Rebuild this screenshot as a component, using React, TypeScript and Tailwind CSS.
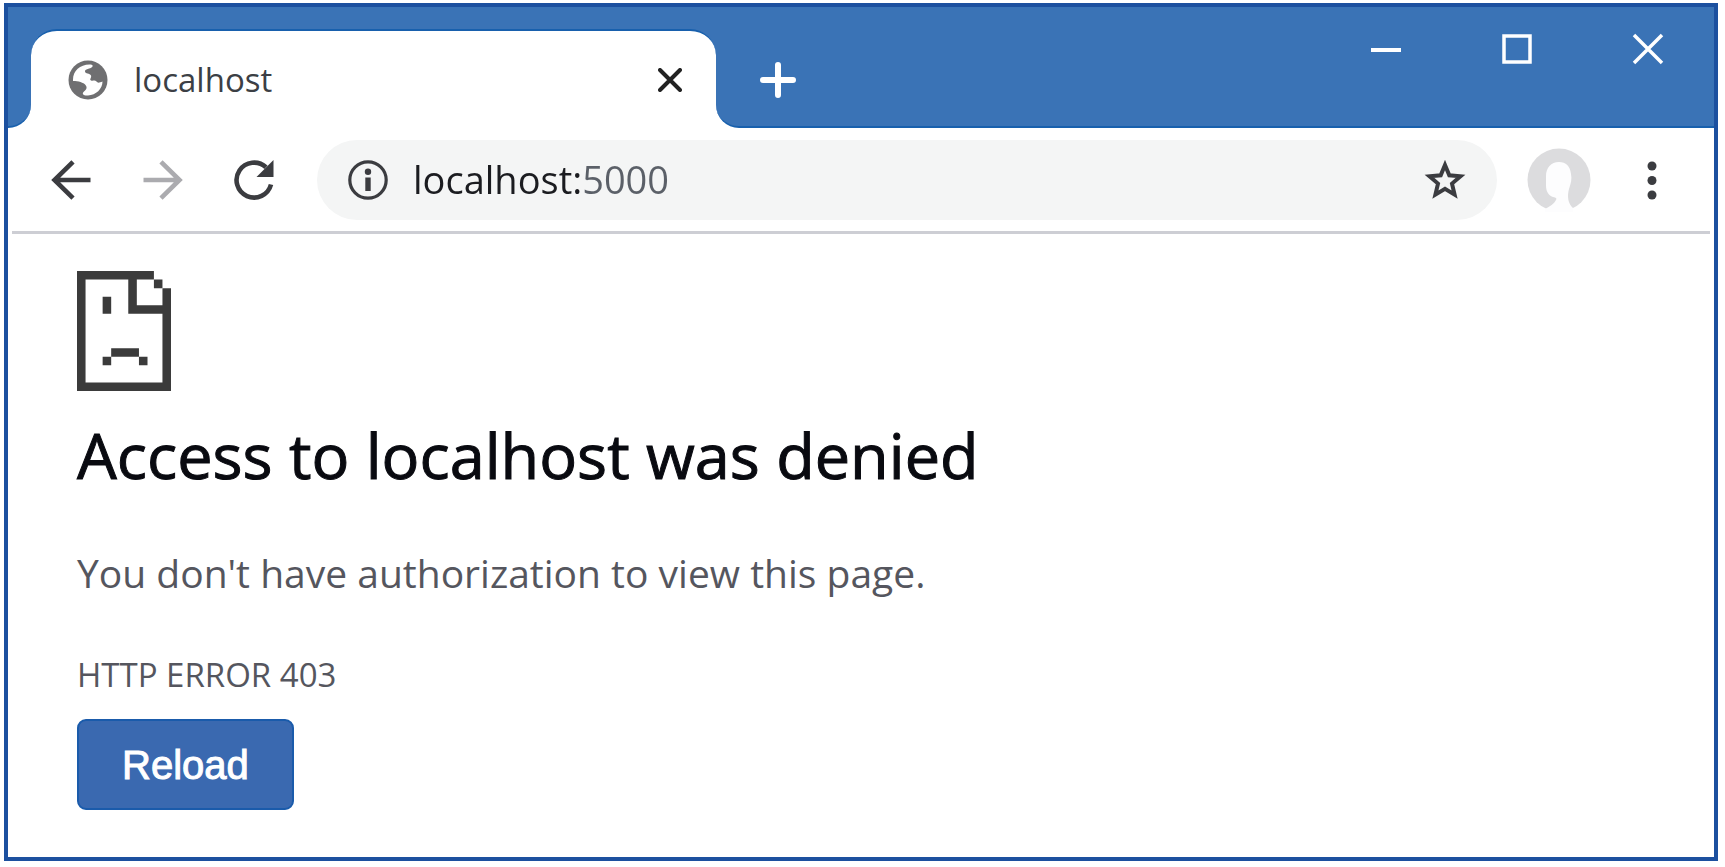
import React from "react";

function GlobeIcon() {
  return (
    <svg viewBox="0 0 40 40" className="size-10 shrink-0" aria-hidden="true">
      <circle cx="20" cy="20" r="19.500" fill="#6f6f71" />
      <path
        d="M5 19.500C5 11 12 4.500 21.500 4.500 25 4.500 25.500 6 23.500 7.500 20 9.500 17 9 17 11.500 17 14 22 13 23 15.500 23.800 18 21 19 23 20.500 25 21.500 26.500 19.500 28.500 21.500 29.500 23 31 23 34.500 21.500 34.500 29 28 35 20 35.500 15 35.800 13.500 33.500 16 31.500 18.500 29.500 19.500 27.500 17.500 25 15.500 22.500 10.500 21 5 21Z"
        fill="#fff"
      />
    </svg>
  );
}

function SadPageIcon() {
  return (
    <svg viewBox="0 0 11 14" className="h-[120px] w-[94px]" fill="#3b3b3b" preserveAspectRatio="none" aria-hidden="true">
      <path d="M0 0h9v1H7v3h3V2h1v12H0Zm1 1v12h9V5H6V1Z" fillRule="evenodd" />
      <path d="M9 1h1v1H9ZM3 3h1v2H3ZM4 9h3.250v1H4ZM3 10h1v1H3ZM7.250 10h1v1h-1Z" />
    </svg>
  );
}

const navButton = "flex h-12 w-12 items-center justify-center";
const windowButton = "flex h-[84px] w-[131px] items-center justify-center";

function TitleBar() {
  return (
    <header className="flex h-[121px] bg-white">
      <div className="w-[23px] shrink-0 rounded-br-[23px] border-b-2 border-[#1860ad] bg-[#3a73b6]" />
      <div className="w-[685px] min-w-0 bg-[#3a73b6] pt-[22px]">
        <div className="h-full rounded-t-[26px] border-t-2 border-[#1860ad] bg-white">
          <div className="flex h-full items-center pr-[22px] pl-[37px]">
            <GlobeIcon />
            <span className="ml-[26px] flex-1 text-[33px] leading-[48px] whitespace-nowrap text-[#3c3f45]">localhost</span>
            <button type="button" aria-label="Close tab" className={navButton}>
              <svg viewBox="0 0 24 24" className="size-6" stroke="#222" strokeWidth="4" strokeLinecap="round">
                <path d="M2 2l20 20M22 2L2 22" />
              </svg>
            </button>
          </div>
        </div>
      </div>
      <div className="flex flex-1 rounded-bl-[23px] border-b-2 border-[#1860ad] bg-[#3a73b6]">
        <button type="button" aria-label="New tab" className="mt-[49px] ml-[38px] flex size-12 items-center justify-center">
          <svg viewBox="0 0 36 36" className="size-9" stroke="#fff" strokeWidth="6" strokeLinecap="round">
            <path d="M18 3v30M3 18h30" />
          </svg>
        </button>
        <div className="ml-auto flex pr-px">
          <button type="button" aria-label="Minimize" className={windowButton}>
            <svg viewBox="0 0 30 30" className="size-[30px]" fill="#fff">
              <path d="M0 14h30v4H0Z" />
            </svg>
          </button>
          <button type="button" aria-label="Maximize" className={windowButton}>
            <svg viewBox="0 0 30 30" className="size-[30px]" fill="none" stroke="#fff" strokeWidth="3.500">
              <path d="M2 2h26v26H2Z" />
            </svg>
          </button>
          <button type="button" aria-label="Close window" className={windowButton}>
            <svg viewBox="0 0 32 32" className="size-8" stroke="#fff" strokeWidth="3.500">
              <path d="M2 2l28 28M30 2L2 30" />
            </svg>
          </button>
        </div>
      </div>
    </header>
  );
}

function Toolbar() {
  return (
    <nav className="mx-1 flex h-[106px] items-center border-b-[3px] border-[#cdced4] pr-[34px] pl-[35px]">
      <button type="button" aria-label="Back" className={navButton}>
        <svg viewBox="0 0 40 40" className="size-10" fill="none" stroke="#3b3c40" strokeWidth="4.600">
          <path d="M39.500 20H4M22 1.800L3.500 20 22 38.200" />
        </svg>
      </button>
      <button type="button" aria-label="Forward" className="ml-11 flex size-12 items-center justify-center">
        <svg viewBox="0 0 40 40" className="size-10" fill="none" stroke="#ababaf" strokeWidth="4.600">
          <path d="M.5 20H36M18 1.800L36.500 20 18 38.200" />
        </svg>
      </button>
      <button type="button" aria-label="Reload page" className="ml-[43px] flex size-12 items-center justify-center">
        <svg viewBox="0 0 40 40" className="size-10" fill="none">
          <path d="M37 24.500A17.500 17.500 0 1 1 32 7.300" stroke="#3b3c40" strokeWidth="4.600" />
          <path d="M39.500 0v17H22.500Z" fill="#3b3c40" />
        </svg>
      </button>
      <div className="ml-[39px] flex h-20 min-w-0 flex-1 items-center rounded-full bg-[#f4f5f5] pr-[28px] pl-[31px]">
        <svg viewBox="0 0 40 40" className="size-10 shrink-0" aria-hidden="true">
          <circle cx="20" cy="20" r="18.200" fill="none" stroke="#3b3c40" strokeWidth="3.200" />
          <path d="M17.300 17.500h5.400v13.500h-5.400Z" fill="#3b3c40" />
          <circle cx="20" cy="11.700" r="3.200" fill="#3b3c40" />
        </svg>
        <input
          type="text"
          aria-label="Address"
          defaultValue="localhost:5000"
          className="ml-[25px] h-14 min-w-0 flex-1 bg-[linear-gradient(to_right,#1b1c20_168px,#5b6068_168px)] bg-clip-text text-[38px] text-transparent caret-black outline-none"
        />
        <button type="button" aria-label="Bookmark this page" className={navButton}>
          <svg viewBox="0 0 42 42" className="size-[42px]" fill="none" stroke="#3b3c40" strokeWidth="4">
            <path d="M21 6l4.300 10.300 11.200 1-8.500 7.300 2.600 11L21 29.800l-9.600 5.800 2.600-11-8.500-7.300 11.200-1Z" />
          </svg>
        </button>
      </div>
      <button type="button" aria-label="Profile" className="ml-[30px]">
        <svg viewBox="0 0 64 64" className="size-16">
          <circle cx="32" cy="32" r="31.500" fill="#dcdcde" />
          <path
            d="M32 14c-8 0-13 6-13 14v9c0 6 2 10 7 12 3 1 4 1 3 3-2 4-6 6-11 9v3h28v-4c-5-4-6-12-4-19 2-6 3-10 2-15-1-8-5-12-12-12Z"
            fill="#fdfdfe"
          />
        </svg>
      </button>
      <button type="button" aria-label="Menu" className="ml-[37px] flex size-12 items-center justify-center">
        <svg viewBox="0 0 10 40" className="h-10 w-2.5" fill="#3b3c40">
          <circle cx="5" cy="6" r="4.500" />
          <circle cx="5" cy="20.500" r="4.500" />
          <circle cx="5" cy="35" r="4.500" />
        </svg>
      </button>
    </nav>
  );
}

export default function App() {
  return (
    <div className="flex min-h-screen bg-white pt-[3px] pr-[7px] pb-[6px] pl-1 font-['Open_Sans','Noto_Sans',sans-serif]">
      <div className="flex flex-1 flex-col border-4 border-[#1c509f] bg-white">
        <TitleBar />
        <Toolbar />
        <main className="flex flex-col items-start pt-[37px] pb-[47px] pl-[69px]">
          <SadPageIcon />
          <h1 className="mt-[22px] text-[63px] leading-[84px] text-[#090a10] [-webkit-text-stroke:1px_#090a10]">Access to localhost was denied</h1>
          <p className="mt-12 text-[39px] leading-[56px] text-[#55565e]">You don't have authorization to view this page.</p>
          <p className="mt-[50px] text-[33px] leading-[48px] text-[#55565e]">HTTP ERROR 403</p>
          <button
            type="button"
            className="mt-5 h-[91px] rounded-[9px] border-2 border-[#1a5bab] bg-[#3a69b0] px-[43px] font-['Liberation_Sans',Arial,sans-serif] text-[40px] text-white [-webkit-text-stroke:1px_white]"
          >
            Reload
          </button>
        </main>
      </div>
    </div>
  );
}
